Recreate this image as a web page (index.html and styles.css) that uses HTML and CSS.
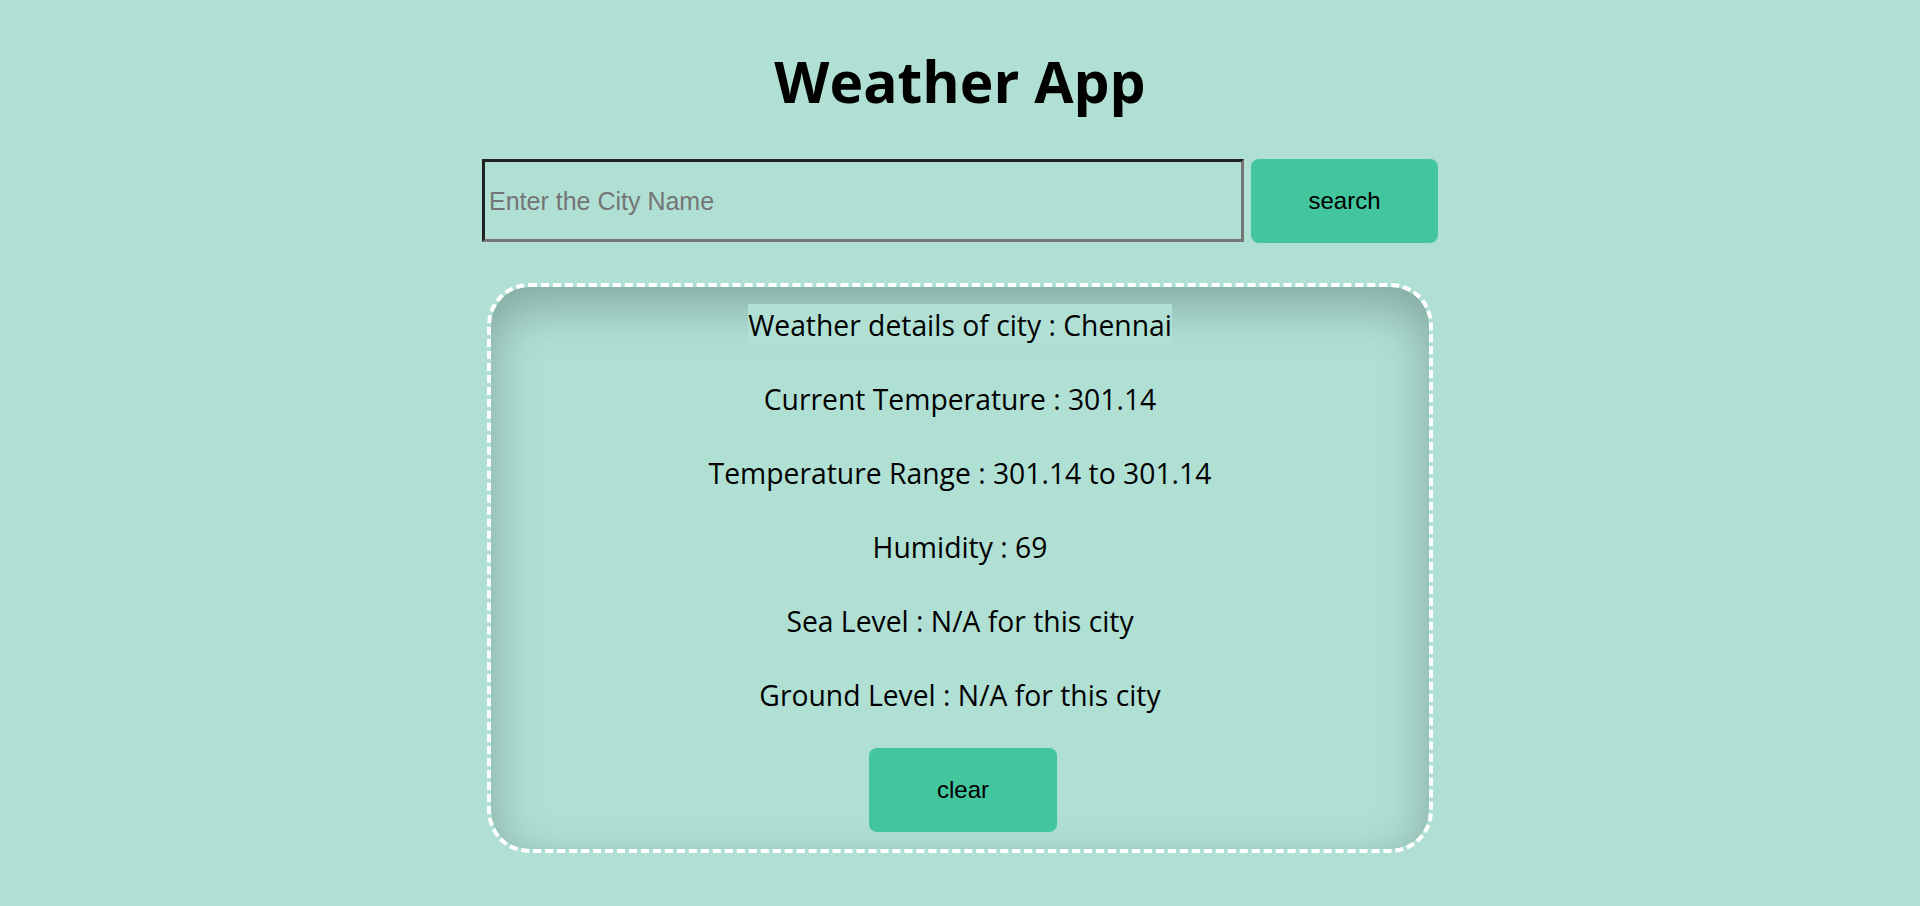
FILE: index.html
```html
<!DOCTYPE html>
<html lang="en">
<head>
<meta charset="utf-8">
<title>Weather App</title>
<link rel="stylesheet" href="styles.css">
</head>
<body>
<main class="app">
  <h1 class="title">Weather App</h1>
  <form class="search-row">
    <input class="city-input" type="text" placeholder="Enter the City Name">
    <button class="btn search-btn" type="button">search</button>
  </form>
  <section class="card">
    <p class="line"><span class="hl">Weather details of city : Chennai</span></p>
    <p class="line"><span class="hl">Current Temperature : 301.14</span></p>
    <p class="line"><span class="hl">Temperature Range : 301.14 to 301.14</span></p>
    <p class="line"><span class="hl">Humidity : 69</span></p>
    <p class="line"><span class="hl">Sea Level : N/A for this city</span></p>
    <p class="line"><span class="hl">Ground Level : N/A for this city</span></p>
    <button class="btn clear-btn" type="button">clear</button>
  </section>
</main>
</body>
</html>
```
FILE: styles.css
```css
html, body {
  margin: 0;
  padding: 0;
  background: #b0e0d4;
}
body {
  font-family: "Open Sans", "Noto Sans", sans-serif;
  color: #000;
  height: 906px;
  overflow: hidden;
}
.app {
  display: flex;
  flex-direction: column;
  align-items: center;
  padding-top: 40px;
}
.title {
  margin: 0;
  font-size: 57px;
  font-weight: 700;
  line-height: 82px;
}
.search-row {
  display: flex;
  gap: 7px;
  margin-top: 37px;
}
.city-input {
  box-sizing: border-box;
  width: 762px;
  height: 83px;
  background: transparent;
  border-style: solid;
  border-width: 3px;
  border-color: #222 #767676 #767676 #222;
  padding: 2px 4px 0;
  font-family: "Liberation Sans", Arial, sans-serif;
  font-size: 25px;
  color: #000;
  outline: none;
}
.city-input::placeholder {
  color: #757575;
}
.btn {
  box-sizing: border-box;
  width: 187px;
  height: 84px;
  border: none;
  border-radius: 8px;
  background: #43c59e;
  font-family: "Liberation Sans", Arial, sans-serif;
  font-size: 24px;
  color: #000;
  padding: 0;
}
.card {
  box-sizing: border-box;
  margin-top: 40px;
  width: 946px;
  height: 570px;
  border: 4px dashed #fff;
  border-radius: 42px;
  box-shadow: inset 0 18px 50px rgba(0, 0, 0, 0.26);
  display: flex;
  flex-direction: column;
  align-items: center;
  gap: 35px;
  padding-top: 17px;
}
.line {
  margin: 0;
  height: 39px;
  font-family: "Open Sans", sans-serif;
  font-size: 28.3px;
  line-height: 39px;
}
.hl {
  display: inline-block;
  vertical-align: top;
  box-sizing: border-box;
  height: 39px;
  line-height: 36px;
  padding-top: 3px;
  background: #b0e0d4;
}
.clear-btn {
  width: 188px;
  margin-left: 6px;
}
```
